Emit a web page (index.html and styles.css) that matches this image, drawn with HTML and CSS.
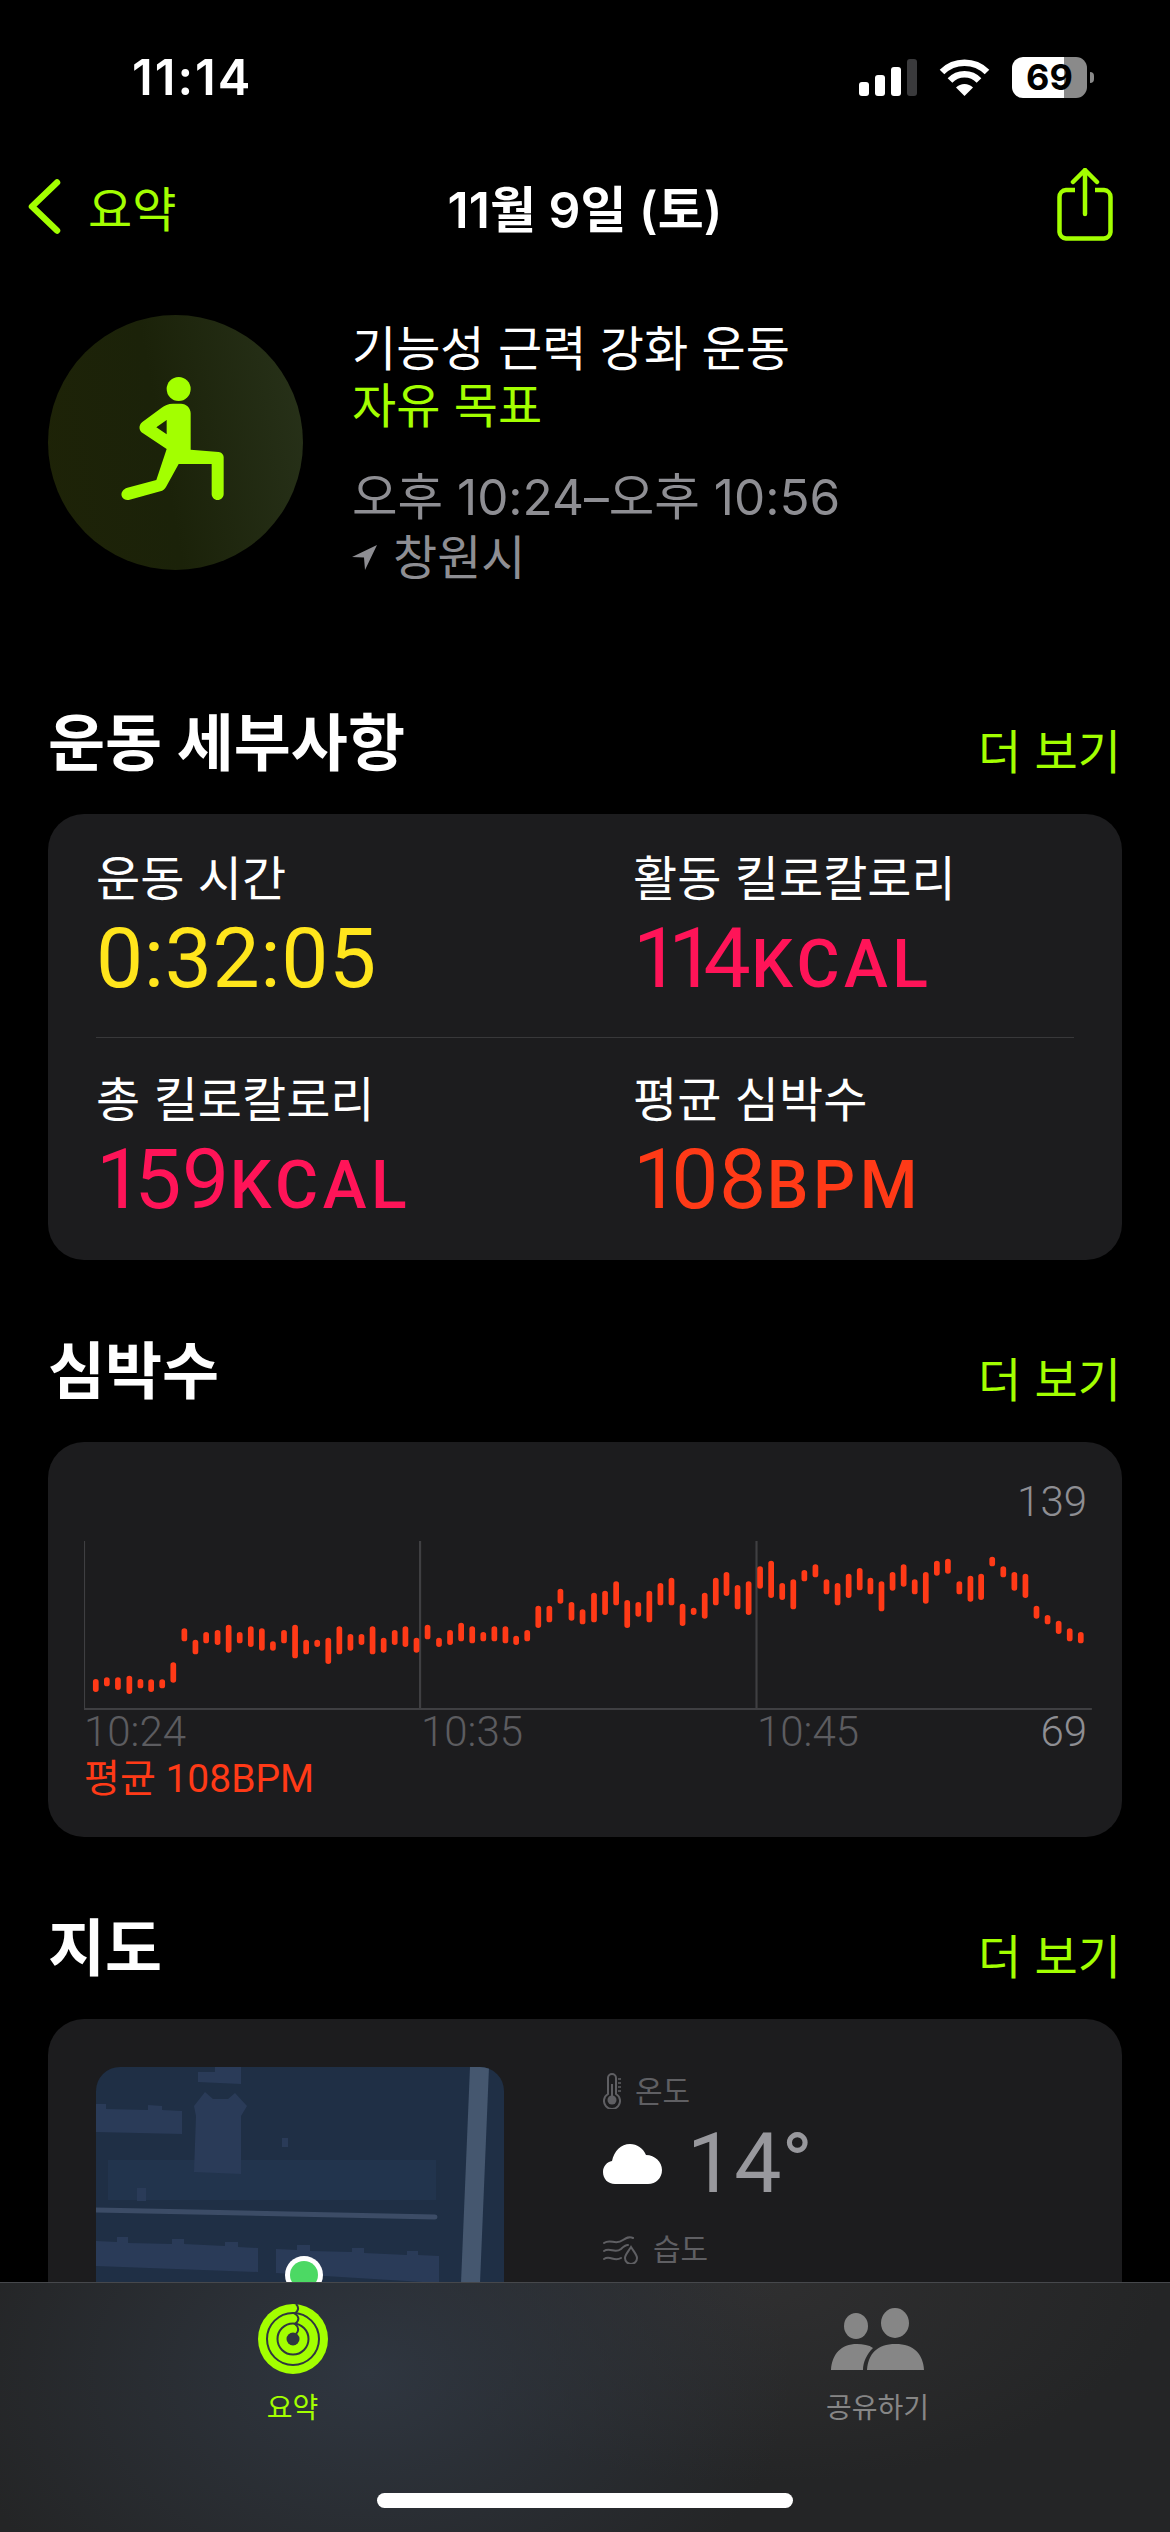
FILE: index.html
```html
<!DOCTYPE html>
<html lang="ko">
<head>
    <meta charset="UTF-8">
    <meta name="viewport" content="width=device-width, initial-scale=1.0">
    <title>운동 요약</title>
    <link rel="stylesheet" href="styles.css">
</head>
<body>

<div class="screen">
    <div class="status-bar">
        <span class="clock">11:14</span>
        <div class="status-icons">
            <svg class="signal" width="58" height="37" viewBox="0 0 58 37">
                <rect x="0" y="23" width="10" height="14" rx="3" fill="#fff"/>
                <rect x="16" y="16" width="10" height="21" rx="3" fill="#fff"/>
                <rect x="32" y="8" width="10" height="29" rx="3" fill="#fff"/>
                <rect x="48" y="0" width="10" height="37" rx="3" fill="#3a3a3c"/>
            </svg>
            <svg class="wifi" width="51" height="37" viewBox="0 0 51 37">
                <path d="M3 13 A32 32 0 0 1 48 13" fill="none" stroke="#fff" stroke-width="6.5"/>
                <path d="M11 21.5 A20 20 0 0 1 40 21.5" fill="none" stroke="#fff" stroke-width="6.5"/>
                <path d="M25.5 37 L17 28.5 A12 12 0 0 1 34 28.5 Z" fill="#fff"/>
            </svg>
            <div class="battery"><span>69</span></div>
            <div class="battery-cap"></div>
        </div>
    </div>

    <nav class="nav">
        <a class="back">
            <svg width="33" height="55" viewBox="0 0 33 55"><path d="M29 3.5 L4 27.5 L29 51.5" fill="none" stroke="#a3ff00" stroke-width="6.5" stroke-linecap="round" stroke-linejoin="round"/></svg>
            <span>요약</span>
        </a>
        <div class="nav-title">11월 9일 (토)</div>
        <svg class="share" width="56" height="73" viewBox="0 0 56 73">
            <path d="M18 22 H9 A7 7 0 0 0 2.5 29 V64 A7 7 0 0 0 9 70.5 H47 A7 7 0 0 0 53.5 64 V29 A7 7 0 0 0 47 22 H38" fill="none" stroke="#a3ff00" stroke-width="4.5"/>
            <path d="M28 46 V2 M16 14 L28 2 L40 14" fill="none" stroke="#a3ff00" stroke-width="4.5" stroke-linecap="round" stroke-linejoin="round"/>
        </svg>
    </nav>

    <div class="workout">
        <div class="workout-badge">
            <svg width="255" height="255" viewBox="55 45 765 765">
                <circle cx="447" cy="267" r="36" fill="#a3ff00"/>
                <path fill-rule="evenodd" fill="#a3ff00" d="M430 311 C415 311 405 316 396 323 L338 366 C326 376 327 392 340 400 L411 447 L380 540 L293 563 C280 567 273 578 276 588 C279 597 290 602 300 599 L392 574 C400 572 405 568 409 561 L447 492 L546 492 L546 582 C546 592 554 600 564 600 C574 600 582 592 582 582 L582 472 C582 463 575 457 567 456 L483 449 L483 340 C483 324 470 311 454 311 Z M411 360 L380 382 L411 403 Z"/>
            </svg>
        </div>
        <div class="workout-info">
            <div class="workout-name">기능성 근력 강화 운동</div>
            <div class="workout-goal">자유 목표</div>
            <div class="workout-time">오후 10:24–오후 10:56</div>
            <div class="workout-place">
                <svg width="26" height="27" viewBox="0 0 26 27"><path d="M25 1 L0 13 L12 13.5 L13 26 Z" fill="#8e8e93"/></svg>
                <span>창원시</span>
            </div>
        </div>
    </div>

    <section class="section">
        <div class="section-head">
            <h2>운동 세부사항</h2>
            <a class="more">더 보기</a>
        </div>
        <div class="card details">
            <div class="stat-row first">
                <div class="stat">
                    <div class="stat-label">운동 시간</div>
                    <div class="stat-value yellow">0:32:05</div>
                </div>
                <div class="stat">
                    <div class="stat-label">활동 킬로칼로리</div>
                    <div class="stat-value pink"><span class="one">11</span>4<small>KCAL</small></div>
                </div>
            </div>
            <div class="stat-row">
                <div class="stat">
                    <div class="stat-label">총 킬로칼로리</div>
                    <div class="stat-value pink"><span class="one-single">1</span>59<small>KCAL</small></div>
                </div>
                <div class="stat">
                    <div class="stat-label">평균 심박수</div>
                    <div class="stat-value red"><span class="one-single">1</span>08<small>BPM</small></div>
                </div>
            </div>
        </div>
    </section>

    <section class="section">
        <div class="section-head">
            <h2>심박수</h2>
            <a class="more">더 보기</a>
        </div>
        <div class="card heart">
            <div class="chart-max">139</div>
            <svg class="chart" width="1008" height="169" viewBox="150 326 2822.4 507" preserveAspectRatio="none">
                <path d="M150 326V830M1091 326V830M2033 326V830M150 830H2972" fill="none" stroke="#3f3f42" stroke-width="6"/>
                <path fill="none" stroke="#ff3a17" stroke-width="16" stroke-linecap="round" d="M183 748V771M214 743V754M245 743V765M277 738V777M308 748V760M338 749V771M369 749V760M400 698V743M431 596V619M462 630V658M492 607V625M524 601V630M555 585V653M586 607V625M617 590V636M648 596V647M679 635V647M710 601V625M741 585V670M772 630V658M803 630V636M834 624V687M865 590V658M896 613V647M927 613V630M958 590V658M989 624V653M1020 601V630M1050 590V636M1081 624V653M1112 585V613M1144 624V636M1175 601V630M1206 579V619M1237 590V625M1268 607V619M1299 590V619M1330 590V625M1360 618V630M1391 601V619M1422 528V579M1453 528V562M1484 477V506M1515 517V557M1546 539V568M1578 489V562M1609 483V540M1640 455V511M1671 511V579M1702 517V545M1733 483V562M1764 460V511M1795 444V511M1826 522V573M1857 534V540M1888 489V551M1919 444V511M1949 427V483M1980 466V523M2011 455V540M2043 410V461M2074 393V489M2105 460V495M2136 449V523M2167 421V439M2198 404V427M2229 449V478M2260 460V511M2291 432V489M2322 415V466M2352 444V478M2383 455V529M2414 427V467M2445 404V455M2476 449V478M2507 427V506M2538 393V422M2569 387V416M2601 455V478M2632 438V500M2662 432V495M2693 381V394M2724 410V427M2755 427V467M2786 432V489M2817 528V551M2848 556V568M2879 573V597M2910 596V619M2941 607V625"/>
            </svg>
            <div class="chart-axis">
                <span>10:24</span>
                <span>10:35</span>
                <span>10:45</span>
                <span class="axis-min">69</span>
            </div>
            <div class="chart-avg">평균 108BPM</div>
        </div>
    </section>

    <section class="section">
        <div class="section-head">
            <h2>지도</h2>
            <a class="more">더 보기</a>
        </div>
        <div class="card map-card">
            <div class="map">
                <svg width="408" height="408" viewBox="0 0 408 408">
                    <rect x="12" y="93" width="328" height="40" fill="#22344d"/>
                    <g fill="#2a3b58">
                        <path d="M0 37 L10 37 L10 42 L52 43 L52 38 L66 39 L66 43 L86 44 L86 67 L0 65 Z"/>
                        <path d="M102 5 L119 5 L119 0 L145 0 L145 17 L102 15 Z"/>
                        <path d="M98 39 L109 25 L117 32 L132 32 L139 26 L151 39 L145 49 L145 107 L98 105 L100 49 Z"/>
                        <rect x="186" y="71" width="6" height="9"/>
                        <rect x="41" y="121" width="9" height="13"/>
                        <path d="M0 174 L21 175 L21 170 L32 170 L32 176 L76 177 L76 172 L88 172 L88 177 L129 179 L129 175 L142 175 L142 180 L162 181 L162 205 L0 199 Z"/>
                        <path d="M180 182 L201 183 L201 178 L214 178 L214 184 L256 185 L256 181 L268 181 L268 186 L311 188 L311 184 L322 184 L322 188 L343 189 L343 216 L180 206 Z"/>
                    </g>
                    <path d="M0 143 L339 150" stroke="#3c4c66" stroke-width="5" stroke-linecap="round"/>
                    <path d="M374 0 L393 0 L384 216 L365 216 Z" fill="#45576f"/>
                    <circle cx="208" cy="208" r="19" fill="#fff"/>
                    <circle cx="208" cy="208" r="14" fill="#4cd964"/>
                </svg>
            </div>
            <div class="weather">
                <div class="weather-label">
                    <svg width="18" height="36" viewBox="0 0 18 36">
                        <path d="M5 21 V5 A4 4 0 0 1 13 5 V21 A8 8 0 1 1 5 21 Z" fill="none" stroke="#5f5f63" stroke-width="2"/>
                        <circle cx="9" cy="27" r="4.5" fill="#5f5f63"/>
                        <path d="M9 27 V11" stroke="#5f5f63" stroke-width="2"/>
                        <path d="M15 6 H18 M15 10 H18 M15 14 H18 M15 18 H18" stroke="#5f5f63" stroke-width="1.5"/>
                    </svg>
                    <span>온도</span>
                </div>
                <div class="weather-temp">
                    <svg width="59" height="40" viewBox="0 0 59 40"><path d="M12 40 C5 40 0 35 0 28 C0 22 4 18 9 17 C11 7 18 0 27 0 C34 0 40 4 43 11 C52 11 59 18 59 26 C59 34 53 40 45 40 Z" fill="#fff"/></svg>
                    <span>14°</span>
                </div>
                <div class="weather-label humidity">
                    <svg width="35" height="29" viewBox="0 0 35 29" fill="none" stroke="#5f5f63" stroke-width="2" stroke-linecap="round">
                        <path d="M1 8 C8 3 12 11 20 5 C23 3 26 1 30 3"/>
                        <path d="M1 16 C7 12 12 19 18 14 C20 12 23 10 25 10"/>
                        <path d="M1 24 C7 20 11 27 18 23"/>
                        <path d="M28 12 C31 17 34 20 34 23 A6 6 0 0 1 22 23 C22 20 25 17 28 12 Z"/>
                    </svg>
                    <span>습도</span>
                </div>
            </div>
        </div>
    </section>

    <div class="tab-bar">
        <div class="tabs">
            <div class="tab active">
                <svg width="70" height="70" viewBox="0 0 70 70">
                    <circle cx="35" cy="35" r="35" fill="#a3ff00"/>
                    <circle cx="35" cy="35" r="26" fill="none" stroke="#2f3640" stroke-width="2"/>
                    <circle cx="35" cy="35" r="15.5" fill="none" stroke="#2f3640" stroke-width="2"/>
                    <circle cx="35" cy="35" r="6.5" fill="#2f3640"/>
                    <path d="M38 0 C41 3 41 7 36.5 9.5 C41 12 42 16 37 20 C41 23 41 27 38 30" fill="none" stroke="#2f3640" stroke-width="2"/>
                </svg>
                <span>요약</span>
            </div>
            <div class="tab">
                <svg width="94" height="70" viewBox="0 0 94 70" fill="#868686">
                    <ellipse cx="64" cy="19" rx="14" ry="15"/>
                    <ellipse cx="25" cy="22" rx="12" ry="13"/>
                    <path d="M36 66 C37 50 46 40 64.5 40 C83 40 92 50 93 66 Z"/>
                    <path d="M0 66 C1 50 10 40 26 40 C32 40 38 41 42 44 C36 50 32 58 32 66 Z"/>
                </svg>
                <span>공유하기</span>
            </div>
        </div>
        <div class="home-indicator"></div>
    </div>
</div>

</body>
</html>
```

FILE: styles.css
```css
body {
    margin: 0;
    background-color: #000;
    color: #fff;
    font-family: Inter, 'Noto Sans CJK KR', sans-serif;
}
.screen {
    position: relative;
    width: 1170px;
    height: 2532px;
    overflow: hidden;
    background-color: #000;
}

/* status bar */
.status-bar {
    display: flex;
    justify-content: space-between;
    align-items: center;
    height: 154px;
    padding: 0 76px 0 132px;
}
.clock {
    font-size: 49px;
    font-weight: 600;
    letter-spacing: 2px;
}
.status-icons {
    display: flex;
    align-items: center;
}
.wifi {
    margin-left: 22px;
}
.battery {
    width: 75px;
    height: 41px;
    margin-left: 22px;
    border-radius: 11px;
    background: linear-gradient(90deg, #fff 69%, #8a8a8a 69%);
    color: #000;
    font-size: 36px;
    font-weight: 700;
    line-height: 41px;
    text-align: center;
}
.battery-cap {
    width: 4px;
    height: 11px;
    margin-left: 3px;
    border-radius: 0 4px 4px 0;
    background-color: #8a8a8a;
}

/* nav */
.nav {
    display: grid;
    grid-template-columns: 1fr auto 1fr;
    align-items: center;
    height: 104px;
    padding: 0 28px;
}
.back {
    display: flex;
    align-items: center;
    gap: 27px;
    color: #a3ff00;
    font-size: 48px;
}
.nav-title {
    font-size: 50px;
    font-weight: 600;
}
.share {
    justify-self: end;
    margin: -3px 29px 0 0;
}

/* workout header */
.workout {
    display: flex;
    gap: 49px;
    height: 255px;
    margin-top: 57px;
    padding-left: 48px;
}
.workout-badge {
    width: 255px;
    height: 255px;
    border-radius: 50%;
    background: linear-gradient(80deg, #1e2307, #1b2209 45%, #28321a);
}
.workout-badge svg {
    display: block;
}
.workout-info {
    margin-top: 8px;
    font-size: 48px;
    line-height: 63px;
}
.workout-name {
    line-height: 51px;
}
.workout-goal {
    color: #a3ff00;
}
.workout-time {
    margin-top: 29px;
    color: #8e8e93;
    font-size: 49.5px;
}
.workout-place {
    display: flex;
    align-items: center;
    gap: 15px;
    margin-top: -3px;
    color: #8e8e93;
}

/* sections */
.section {
    margin-top: 72px;
    padding: 0 48px;
}
.workout + .section {
    margin-top: 134px;
}
.section-head {
    display: flex;
    justify-content: space-between;
    align-items: center;
    height: 80px;
    margin-bottom: 30px;
}
.section-head h2 {
    margin: 0;
    font-size: 62px;
    font-weight: 700;
    line-height: 80px;
}
.more {
    margin: 16px 1px 0 0;
    color: #a3ff00;
    font-size: 47px;
    line-height: 60px;
}
.card {
    border-radius: 36px;
    background-color: #1c1c1e;
}

/* stats */
.details {
    padding: 0 48px;
}
.stat-row {
    display: grid;
    grid-template-columns: 537px 1fr;
    padding: 32px 0 30px;
}
.stat-row.first {
    padding: 35px 0 28px;
    border-bottom: 1px solid #38383a;
}
.stat-label {
    height: 60px;
    font-size: 48px;
    line-height: 60px;
}
.stat-value {
    height: 100px;
    font-family: Roboto, sans-serif;
    font-size: 84px;
    line-height: 100px;
    letter-spacing: 0.6px;
}
.stat-value small {
    font-size: 66px;
    font-weight: 500;
    letter-spacing: 4.5px;
}
.one {
    letter-spacing: -12px;
}
.one-single {
    letter-spacing: -9px;
}
.yellow {
    color: #ffe51c;
}
.pink {
    color: #ff1458;
}
.red {
    color: #ff3a17;
}

/* heart rate */
.heart {
    height: 395px;
    padding: 35px 30px 0 36px;
    box-sizing: border-box;
}
.chart-max {
    padding-right: 5px;
    color: #8e8e93;
    font-family: Roboto, sans-serif;
    font-size: 42px;
    font-weight: 300;
    line-height: 50px;
    text-align: right;
}
.chart {
    display: block;
    margin-top: 14px;
}
.chart-axis {
    display: grid;
    grid-template-columns: 337px 336px 1fr auto;
    padding-right: 5px;
    color: #5c5c60;
    font-family: Roboto, sans-serif;
    font-size: 42px;
    font-weight: 300;
    line-height: 44px;
}
.axis-min {
    color: #8e8e93;
}
.chart-avg {
    color: #ff3a17;
    font-family: Roboto, 'Noto Sans CJK KR', sans-serif;
    font-size: 39px;
    line-height: 50px;
}

/* map */
.map-card {
    display: flex;
    gap: 99px;
    height: 600px;
    padding: 48px;
    box-sizing: border-box;
}
.map {
    width: 408px;
    height: 408px;
    border-radius: 24px;
    overflow: hidden;
    background-color: #1f2f45;
}
.map svg {
    display: block;
}
.weather {
    padding-top: 4px;
}
.weather-label {
    display: flex;
    align-items: center;
    gap: 14px;
    height: 40px;
    color: #5f5f63;
    font-size: 30px;
    line-height: 40px;
}
.weather-label.humidity {
    gap: 15px;
    margin-top: 25px;
}
.weather-temp {
    display: flex;
    align-items: center;
    gap: 25px;
    height: 80px;
    margin-top: 13px;
    color: #98989d;
    font-family: Roboto, sans-serif;
    font-size: 84px;
    line-height: 80px;
}

/* tab bar */
.tab-bar {
    position: absolute;
    left: 0;
    right: 0;
    bottom: 0;
    height: 250px;
    box-sizing: border-box;
    border-top: 1px solid #46484c;
    background:
        radial-gradient(ellipse 420px 300px at 370px 90px, #2f3640, transparent),
        radial-gradient(ellipse 400px 200px at 760px 0, #2f2f30, transparent),
        #242526;
}
.tabs {
    display: flex;
    padding-top: 21px;
}
.tab {
    flex: 1;
    display: flex;
    flex-direction: column;
    align-items: center;
    gap: 14px;
    color: #868686;
    font-size: 28px;
    line-height: 40px;
}
.tab.active {
    color: #a3ff00;
}
.home-indicator {
    width: 416px;
    height: 15px;
    margin: 65px auto 0;
    border-radius: 8px;
    background-color: #fff;
}
```
